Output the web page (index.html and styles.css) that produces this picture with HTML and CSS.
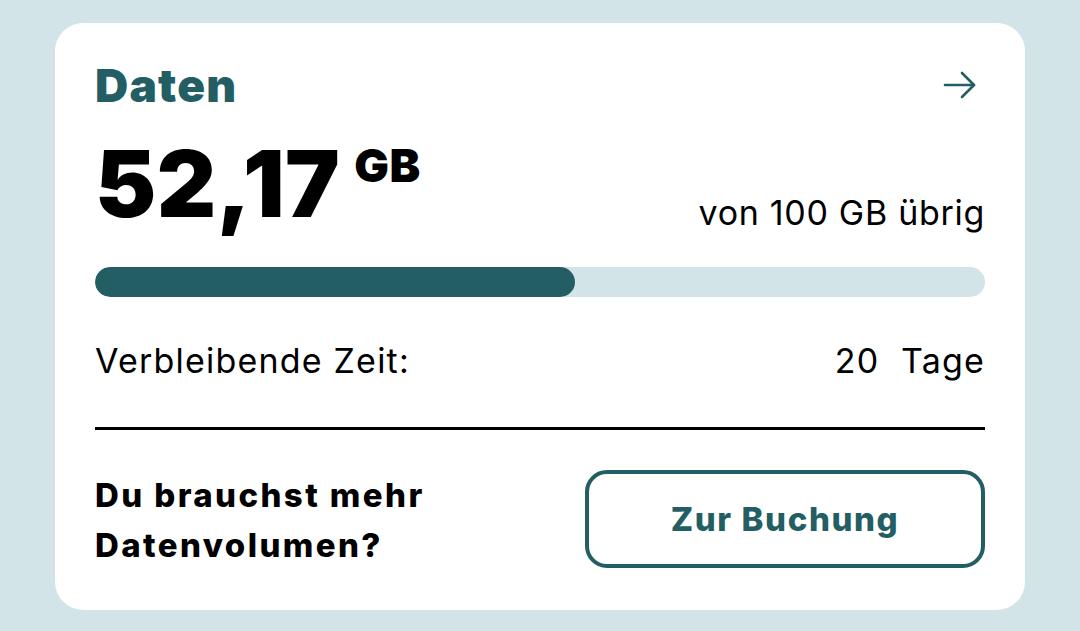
FILE: index.html
```html
<!DOCTYPE html>
<html lang="de">
<head>
<meta charset="utf-8">
<title>Daten</title>
<link rel="stylesheet" href="styles.css">
</head>
<body>
<main class="card">
  <header class="head">
    <h1 class="title">Daten</h1>
    <a class="arrow" href="#" aria-label="Details">
      <svg width="34" height="28" viewBox="0 0 34 28" fill="none" stroke="#235e64" stroke-width="2.6" stroke-linecap="round" stroke-linejoin="round">
        <path d="M2 14H31"/>
        <path d="M19 2L31 14L19 26"/>
      </svg>
    </a>
  </header>
  <section class="amount-row">
    <div class="amount"><span class="num">52,17</span><span class="unit">GB</span></div>
    <div class="total">von 100 GB übrig</div>
  </section>
  <div class="bar"><div class="fill" style="width:53.9%"></div></div>
  <section class="time-row">
    <span>Verbleibende Zeit:</span>
    <span>20&nbsp; Tage</span>
  </section>
  <hr class="divider">
  <section class="cta-row">
    <p class="cta-text">Du brauchst mehr<br>Datenvolumen?</p>
    <a class="btn" href="#">Zur Buchung</a>
  </section>
</main>
</body>
</html>
```

FILE: styles.css
```css
* { box-sizing: border-box; }
html, body { margin: 0; }
body {
  background: #d2e4e8;
  padding: 23px 55px 21px;
  font-family: Inter, "Noto Sans", sans-serif;
  color: #000;
}
.card {
  background: #fff;
  border-radius: 28px;
  height: 587px;
  padding: 35px 40px 0;
  display: flex;
  flex-direction: column;
}
.head {
  display: flex;
  justify-content: space-between;
  align-items: center;
  height: 54px;
}
.title {
  margin: 0;
  font-size: 46px;
  font-weight: 900;
  color: #235e64;
  line-height: 1;
  letter-spacing: 1.2px;
}
.arrow { display: flex; margin-right: 8px; }
.amount-row {
  display: flex;
  justify-content: space-between;
  align-items: flex-end;
  margin-top: 26px;
  height: 92px;
}
.amount { display: flex; align-items: flex-start; }
.num {
  font-size: 92px;
  font-weight: 900;
  line-height: 1;
  letter-spacing: 0.5px;
}
.unit {
  font-size: 46px;
  font-weight: 900;
  line-height: 1;
  margin-left: 14px;
  margin-top: 4px;
  letter-spacing: 0.5px;
}
.total {
  font-size: 34px;
  line-height: 1;
  letter-spacing: 0.7px;
}
.bar {
  margin-top: 37px;
  height: 30px;
  border-radius: 15px;
  background: #d2e4e8;
  overflow: hidden;
}
.fill {
  height: 100%;
  background: #235e64;
  border-radius: 15px;
}
.time-row {
  display: flex;
  justify-content: space-between;
  font-size: 34px;
  line-height: 1;
  letter-spacing: 1.2px;
  margin-top: 47px;
}
.divider {
  margin: 49px 0 0;
  border: 0;
  height: 3px;
  background: #000;
}
.cta-row {
  display: flex;
  justify-content: space-between;
  align-items: flex-start;
  margin-top: 40px;
}
.cta-text {
  margin: 0;
  font-size: 33px;
  font-weight: 800;
  line-height: 50px;
  letter-spacing: 2.4px;
}
.btn {
  width: 400px;
  height: 98px;
  border: 4px solid #235e64;
  border-radius: 22px;
  display: flex;
  align-items: center;
  justify-content: center;
  color: #235e64;
  font-size: 33px;
  font-weight: 800;
  letter-spacing: 1.6px;
  text-decoration: none;
}
```
